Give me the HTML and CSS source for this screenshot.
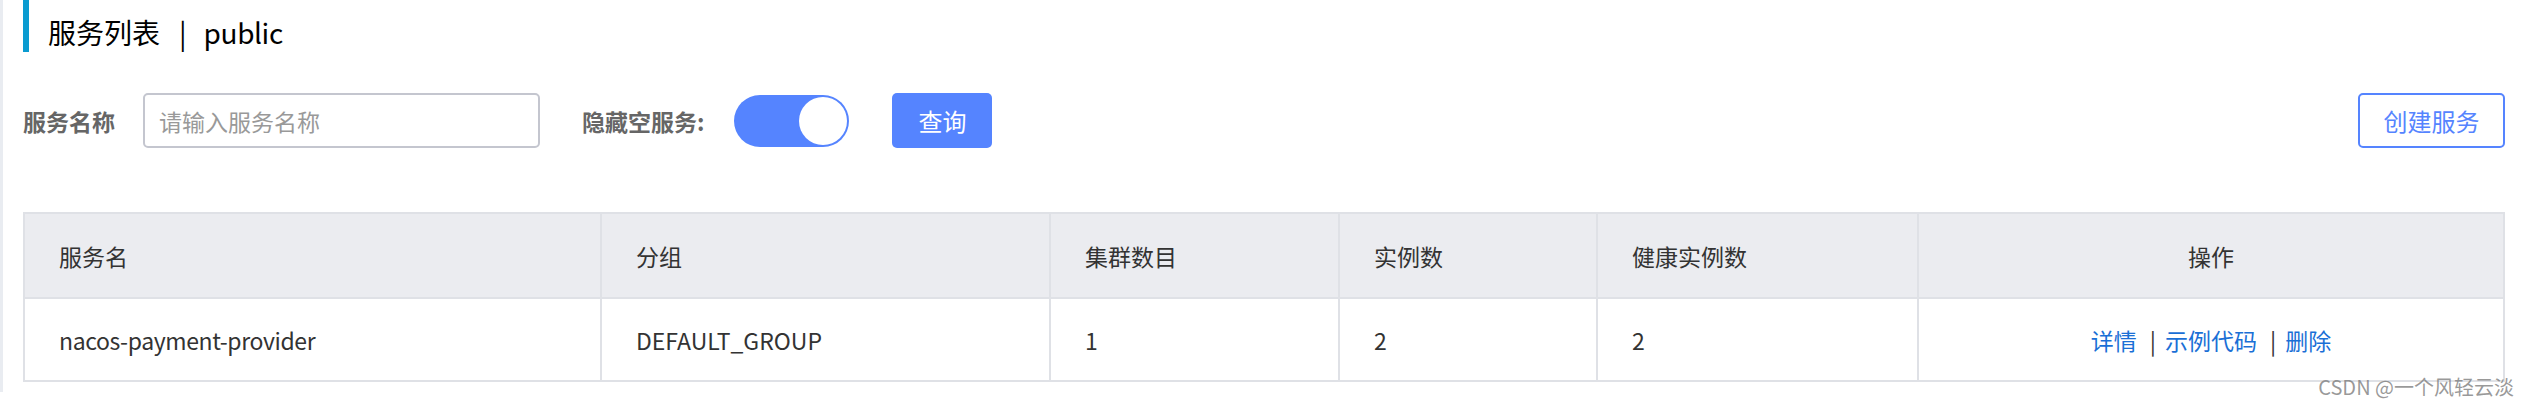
FILE: index.html
```html
<!DOCTYPE html>
<html lang="zh-CN">
<head>
<meta charset="utf-8">
<title>服务列表</title>
<link rel="stylesheet" href="styles.css">
</head>
<body>
<div class="layout">
  <div class="edge"></div>
  <main class="main">
    <h1 class="title"><span>服务列表</span><span class="sep">|</span><span class="ns">public</span></h1>
    <div class="toolbar">
      <label class="label">服务名称</label>
      <input class="input" type="text" placeholder="请输入服务名称">
      <span class="label label-hide">隐藏空服务:</span>
      <span class="switch"><span class="knob"></span></span>
      <button class="btn btn-primary">查询</button>
      <button class="btn btn-outline">创建服务</button>
    </div>
    <table class="grid">
      <colgroup>
        <col style="width:577px"><col style="width:449px"><col style="width:289px"><col style="width:258px"><col style="width:321px"><col style="width:586px">
      </colgroup>
      <thead>
        <tr><th>服务名</th><th>分组</th><th>集群数目</th><th>实例数</th><th>健康实例数</th><th class="center">操作</th></tr>
      </thead>
      <tbody>
        <tr>
          <td><span class="ns">nacos-payment-provider</span></td>
          <td>DEFAULT_GROUP</td>
          <td>1</td>
          <td>2</td>
          <td>2</td>
          <td class="center"><a class="link">详情</a><span class="bar">|</span><a class="link">示例代码</a><span class="bar">|</span><a class="link">删除</a></td>
        </tr>
      </tbody>
    </table>
  </main>
</div>
<div class="watermark">CSDN @一个风轻云淡</div>
</body>
</html>
```
FILE: styles.css
```css
html, body {
  margin: 0;
  padding: 0;
  background: #ffffff;
}
body {
  font-family: "Microsoft YaHei", "Noto Sans CJK SC", "Noto Sans", sans-serif;
  color: #333333;
  width: 2522px;
  height: 405px;
  position: relative;
  overflow: hidden;
}
.layout {
  display: flex;
}
.edge {
  width: 3px;
  height: 392px;
  background: #e9ecf1;
  flex: none;
}
.main {
  flex: 1;
  padding: 0 19px 0 20px;
}
.title {
  margin: 0;
  height: 52px;
  box-sizing: border-box;
  border-left: 6px solid #0a9bd0;
  padding: 12px 0 0 19px;
  font-size: 28px;
  line-height: 40px;
  font-weight: normal;
  color: #000;
  display: flex;
}
.title .sep {
  margin: 0 17px 0 19px;
}
.ns {
  letter-spacing: -0.4px;
}
.toolbar {
  margin-top: 41px;
  height: 55px;
  display: flex;
  align-items: center;
}
.label {
  font-size: 23px;
  font-weight: bold;
  color: #666666;
}
.input {
  margin-left: 28px;
  width: 397px;
  height: 55px;
  box-sizing: border-box;
  border: 2px solid #c4c6cf;
  border-radius: 5px;
  padding: 0 14px;
  font-family: inherit;
  font-size: 23px;
  color: #333;
  outline: none;
}
.input::placeholder {
  color: #999999;
}
.label-hide {
  margin-left: 42px;
}
.switch {
  margin-left: 30px;
  width: 115px;
  height: 52px;
  border-radius: 26px;
  background: #5584ff;
  display: flex;
  align-items: center;
  justify-content: flex-end;
  padding-right: 2px;
  box-sizing: border-box;
}
.knob {
  width: 48px;
  height: 48px;
  border-radius: 50%;
  background: #fff;
}
.btn {
  height: 55px;
  box-sizing: border-box;
  border-radius: 5px;
  font-family: inherit;
  font-size: 24px;
  padding: 0;
  cursor: pointer;
}
.btn-primary {
  margin-left: 43px;
  width: 100px;
  background: #5584ff;
  color: #fff;
  border: none;
}
.btn-outline {
  margin-left: auto;
  width: 147px;
  background: #fff;
  color: #5584ff;
  border: 2px solid #5584ff;
}
.grid {
  margin-top: 64px;
  width: 2480px;
  border-collapse: collapse;
  table-layout: fixed;
  font-size: 23px;
}
.grid th, .grid td {
  border: 2px solid #dfe1e6;
  text-align: left;
  padding: 0 0 0 34px;
  font-weight: normal;
  color: #333;
}
.grid th {
  background: #ebecf0;
  height: 83px;
}
.grid td {
  height: 81px;
}
.grid .center {
  text-align: center;
  padding: 0;
}
.link {
  color: #1a6fd6;
}
.bar {
  margin: 0 9px 0 13px;
  color: #333;
}
.watermark {
  position: absolute;
  right: 8px;
  bottom: 4px;
  font-size: 20px;
  color: rgba(120, 120, 120, 0.75);
}
```
